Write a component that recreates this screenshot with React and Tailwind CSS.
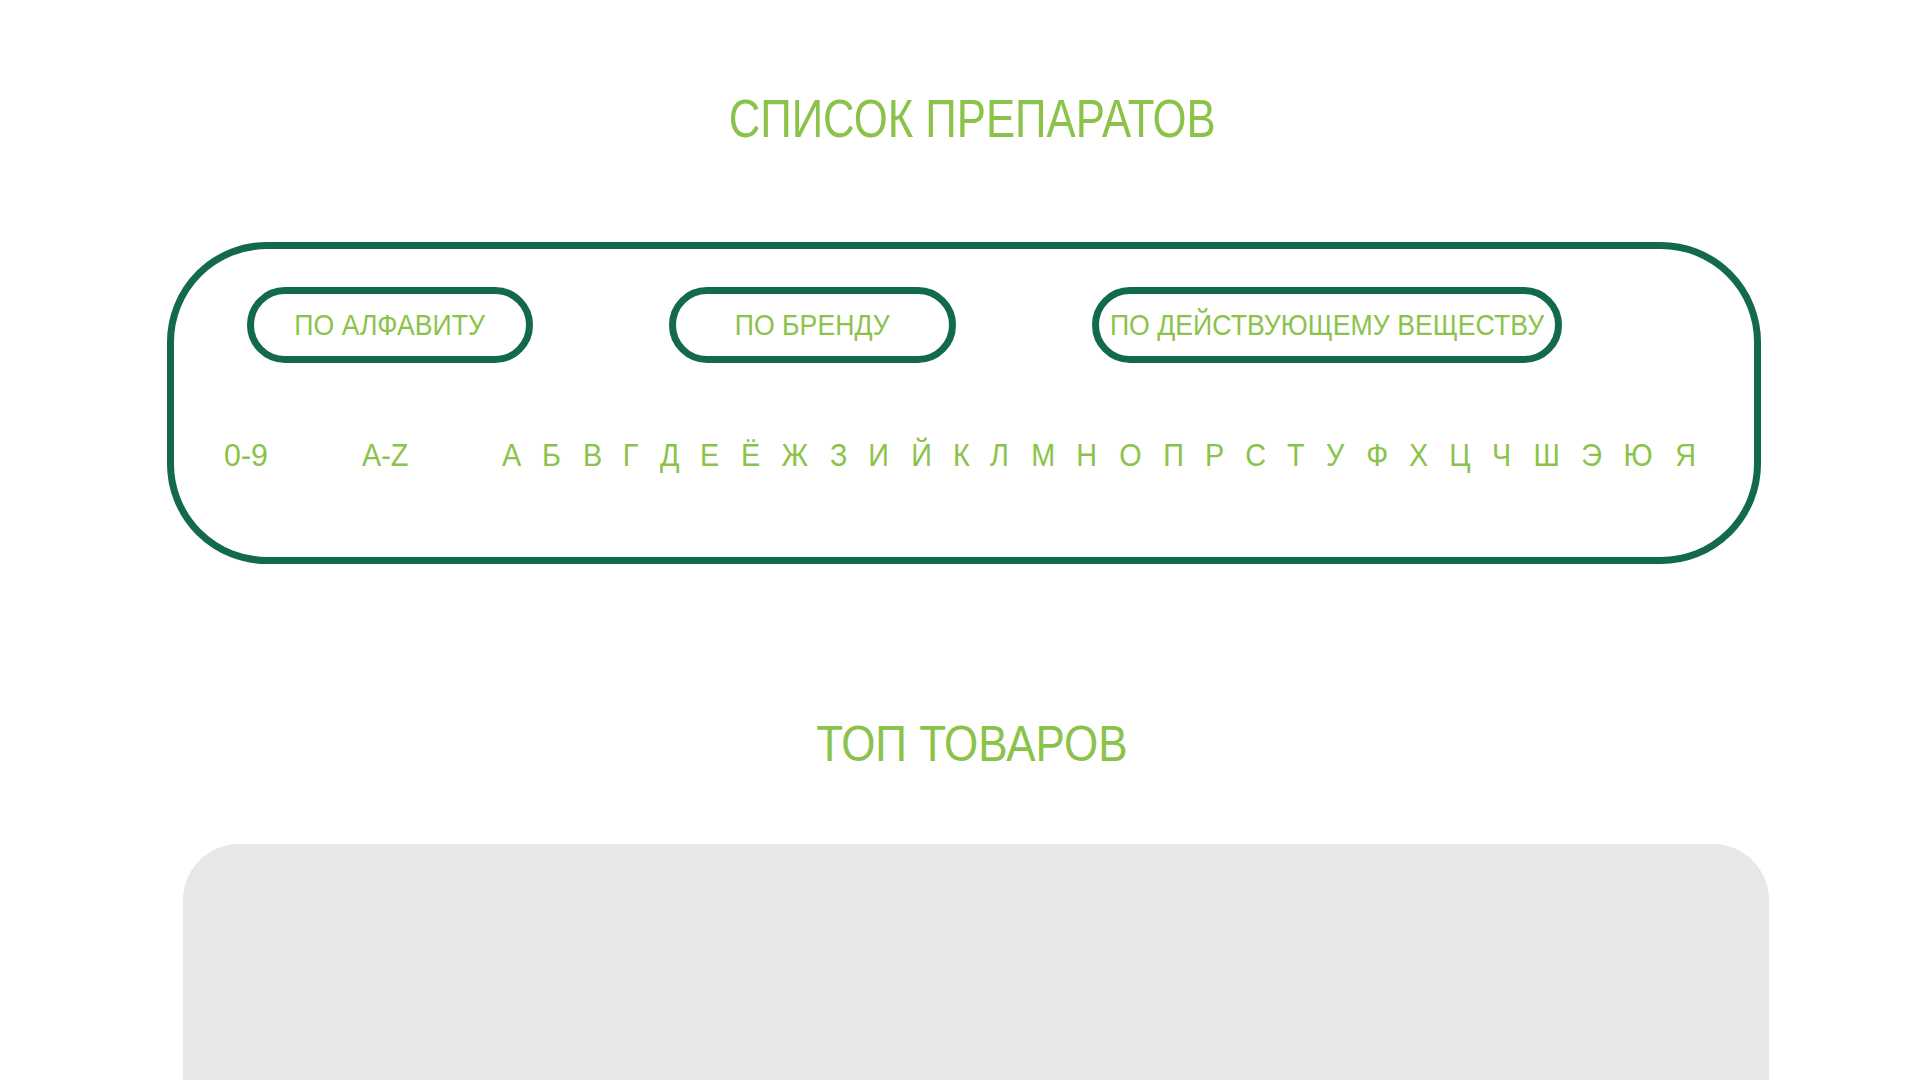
import React from 'react';

const letters = ['А', 'Б', 'В', 'Г', 'Д', 'Е', 'Ё', 'Ж', 'З', 'И', 'Й', 'К', 'Л', 'М', 'Н', 'О', 'П', 'Р', 'С', 'Т', 'У', 'Ф', 'Х', 'Ц', 'Ч', 'Ш', 'Э', 'Ю', 'Я'];

const tabs = [
    { id: 'abc', label: 'ПО АЛФАВИТУ', w: 'w-[286px]' },
    { id: 'brand', label: 'ПО БРЕНДУ', w: 'w-[287px]' },
    { id: 'subst', label: 'ПО ДЕЙСТВУЮЩЕМУ ВЕЩЕСТВУ', w: 'w-[470px]' },
];

const App = () => {
    return (
        <div className="w-[1920px] min-h-screen bg-white font-['Liberation_Sans',Arial,sans-serif] text-[#8bc34a]">
            {/* Header */}
            <div className="pt-[92px] pl-[24px] text-center">
                <h1 className="inline-block text-[53px] leading-none font-normal scale-x-[0.825] whitespace-nowrap">СПИСОК ПРЕПАРАТОВ</h1>
            </div>

            {/* Filter card */}
            <div className="mt-[97px] ml-[167px] w-[1594px] h-[322px] border-[7px] border-[#12694b] rounded-[100px] flex flex-col">
                <div className="pt-[38px] pl-[73px] flex gap-[136px]">
                    {tabs.map((t) => (
                        <button
                            key={t.id}
                            className={`${t.w} h-[76px] border-[7px] border-[#12694b] rounded-full flex items-center justify-center text-[29px] leading-none text-[#8bc34a] whitespace-nowrap`}
                        >
                            <span className="inline-block scale-x-[0.92]">{t.label}</span>
                        </button>
                    ))}
                </div>

                <div className="mt-[76px] pl-[50px] flex items-start text-[32px] leading-none">
                    <span className="w-[138px]">
                        <span className="inline-block origin-left scale-x-[0.95]">0-9</span>
                    </span>
                    <span className="w-[139px]">
                        <span className="inline-block origin-left scale-x-[0.9]">A-Z</span>
                    </span>
                    <div className="w-[1196px] flex justify-between">
                        {letters.map((l) => (
                            <span key={l} className="inline-block scale-x-[0.9]">{l}</span>
                        ))}
                    </div>
                </div>
            </div>

            {/* Top products */}
            <div className="mt-[155px] pl-[24px] text-center">
                <h2 className="inline-block text-[50px] leading-none font-normal scale-x-[0.88] whitespace-nowrap">ТОП ТОВАРОВ</h2>
            </div>

            <div className="mt-[75px] ml-[183px] w-[1586px] h-[320px] bg-[#e8e8e8] rounded-t-[56px]" />
        </div>
    );
};

export default App;
